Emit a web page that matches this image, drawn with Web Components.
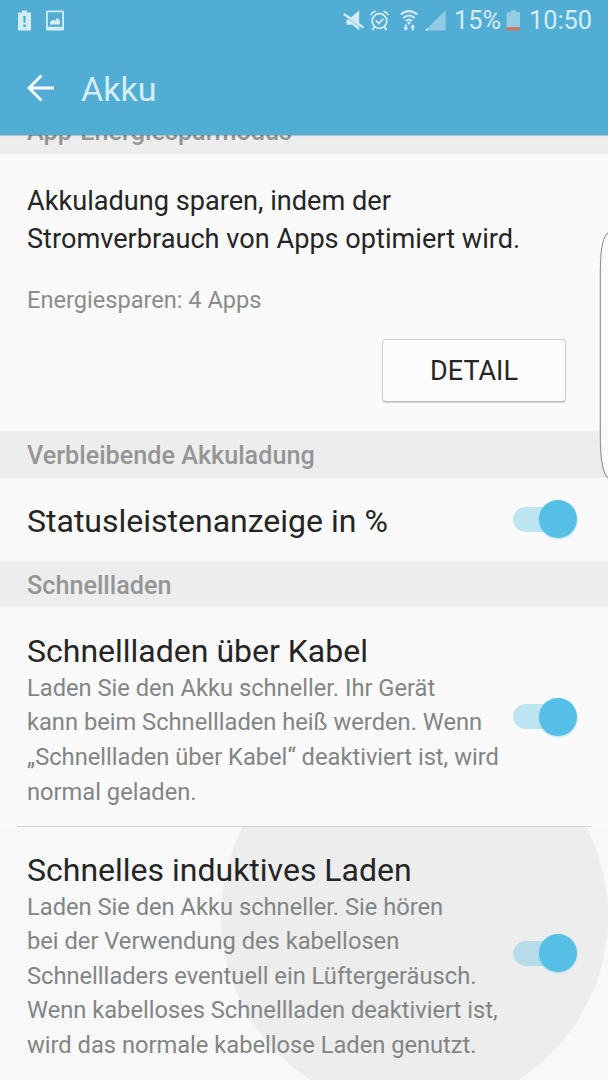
<!DOCTYPE html>
<html lang="de">
<head>
<meta charset="utf-8">
<title>Akku</title>
<style>
  body {
    margin: 0;
    font-family: Roboto, "Liberation Sans", sans-serif;
    color: #252525;
    background: #fafafa;
  }
</style>
</head>
<body>
<settings-screen></settings-screen>

<script>
const make = (html) => {
  const template = document.createElement('template');
  template.innerHTML = html;
  return template;
};

class BaseElement extends HTMLElement {
  constructor() {
    super();
    this._shadowRoot = this.attachShadow({ mode: 'open' });
    this._shadowRoot.appendChild(this.constructor.template.content.cloneNode(true));
  }
}

class StatusBar extends BaseElement {}
StatusBar.template = make(`
  <style>
    :host {
      display: flex;
      justify-content: space-between;
      height: 41px;
      padding: 0 16px 0 17px;
      color: #d6ecf5;
      font-size: 25.300px;
      line-height: 43px;
    }

    div {
      display: flex;
      align-items: center;
    }

    svg {
      display: block;
      fill: currentColor;
    }

    .picture { margin-left: 13px; }
    .alarm { margin-left: 6px; }
    .wifi { margin-left: 11px; }
    .signal { margin-left: 7px; }
    .percent { margin-left: 7px; }
    .battery { margin-left: 5px; }
    .time { margin-left: 8px; }
  </style>
  <div>
    <svg width="15" height="22" viewBox="0 0 15 22">
      <path fill-rule="evenodd" d="M5 0.5h5v2h4v18H1v-18h4zM6.2 6l.5 7h1.6l.5-7zM6.2 14.6v2.4h2.6v-2.4z"/>
    </svg>
    <svg class="picture" width="20" height="22" viewBox="0 0 20 22">
      <path fill-rule="evenodd" d="M2.200 .5h15.600q1.200 0 1.200 1.200v17.600q0 1.200-1.200 1.200H2.200q-1.200 0-1.200-1.200V1.700q0-1.200 1.200-1.200zM2.800 2.200v14.600h14.400V2.200z"/>
      <path d="M5 14.500v-2.500l3-2.600 1.600 1.600 3-3.300L15 11v3.500z"/>
    </svg>
  </div>
  <div>
    <svg width="21" height="22" viewBox="0 0 21 22">
      <path d="M3.500 9.500h2.300l10.400 7.300v3.600L9.500 14.800h-6z"/>
      <path d="M7.500 7.800L16.200.5v13.400z"/>
      <path d="M.8 4L20.300 17.500" fill="none" stroke="currentColor" stroke-width="2.200"/>
    </svg>
    <svg class="alarm" width="19" height="22" viewBox="0 0 19 22">
      <g fill="none" stroke="currentColor" stroke-width="1.800">
        <circle cx="9.500" cy="11" r="7.300"/>
        <path d="M.8 5Q2 2.300 5.500 1.200M18.200 5Q17 2.300 13.500 1.200M4.600 16.500l-2 3.600M14.400 16.500l2 3.600M6 10.700l2.900 2.800L13.300 8.500"/>
      </g>
    </svg>
    <svg class="wifi" width="18" height="22" viewBox="0 0 18 22">
      <g fill="none" stroke="currentColor" stroke-width="2">
        <path d="M.8 4.600Q9-2.400 17.200 4.600M3.300 8Q9 3 14.700 8M5.900 11.100Q9 8.300 12.100 11.100"/>
      </g>
      <circle cx="9" cy="13" r="1.500"/>
      <path d="M4.800 14.500h2v3h1.500l-2.500 3.500-2.500-3.500h1.500zM11.800 20.500h2v-3h1.500l-2.500-3.300-2.500 3.300h1.500z"/>
    </svg>
    <svg class="signal" width="22" height="22" viewBox="0 0 22 22">
      <path d="M0 20.500l3.500-3.500v3.500z"/>
      <path d="M4.500 20.500V16.200L20.700.3v20.200z" opacity=".47"/>
    </svg>
    <span class="percent">15%</span>
    <svg class="battery" width="15" height="22" viewBox="0 0 15 22">
      <path d="M5 .2h5v2h4v15.200H.7V2.200H5z" opacity=".5"/>
      <path d="M.7 17.400H14v3H.7z" fill="#dd6f53"/>
    </svg>
    <span class="time">10:50</span>
  </div>
`);

class AppBar extends BaseElement {}
AppBar.template = make(`
  <style>
    :host {
      display: block;
      position: relative;
      z-index: 1;
      height: 135px;
      background: #52add5;
      box-shadow: 0 1px 1px rgba(0, 0, 0, .18);
    }

    .title {
      display: flex;
      align-items: center;
      height: 94px;
      padding-left: 27px;
    }

    h1 {
      margin: 2px 0 0 26px;
      color: #d6edf6;
      font-size: 34px;
      font-weight: 400;
      line-height: 40px;
    }
  </style>
  <status-bar></status-bar>
  <div class="title">
    <svg width="28" height="28" viewBox="0 0 28 28" fill="none" stroke="#fff" stroke-width="2.800">
      <path d="M27 14H2M14.500 1.600L2 14l12.500 12.400"/>
    </svg>
    <h1><slot></slot></h1>
  </div>
`);

class SectionHeader extends BaseElement {}
SectionHeader.template = make(`
  <style>
    :host {
      display: block;
      box-sizing: border-box;
      height: 47px;
      padding-left: 27px;
      background: #ededed;
      color: #949696;
      font-size: 25.200px;
      font-weight: 500;
      line-height: 50px;
      white-space: nowrap;
    }
  </style>
  <slot></slot>
`);

class ToggleSwitch extends BaseElement {}
ToggleSwitch.template = make(`
  <style>
    :host {
      display: flex;
      flex: none;
      align-items: center;
      width: 64px;
      height: 38px;
    }

    .track {
      width: 44px;
      height: 25px;
      border-radius: 13px 0 0 13px;
      background: rgba(86, 191, 230, .36);
    }

    .thumb {
      width: 38px;
      height: 38px;
      margin-left: -18px;
      border-radius: 50%;
      background: #56bfe5;
      box-shadow: 0 1px 2px rgba(86, 191, 229, .5);
    }
  </style>
  <div class="track"></div>
  <div class="thumb"></div>
`);

class SettingRow extends BaseElement {}
SettingRow.template = make(`
  <style>
    :host {
      display: flex;
      position: relative;
      box-sizing: border-box;
      align-items: center;
      justify-content: space-between;
      height: var(--row-height, 83px);
      padding: 0 31px 0 27px;
      overflow: hidden;
    }

    .text {
      position: relative;
      padding-top: var(--text-shift, 3px);
      white-space: nowrap;
    }

    h2 {
      margin: 0;
      font-size: 32px;
      font-weight: 400;
      line-height: 39px;
    }

    p {
      margin: 0;
      color: #828585;
      font-size: 23.680px;
      line-height: 34.600px;
    }

    toggle-switch {
      position: relative;
      margin-bottom: 1px;
    }

    .ripple, .line { display: none; }

    :host([divider]) .line {
      display: block;
      position: absolute;
      left: 17px;
      right: 17px;
      bottom: 0;
      height: 1px;
      background: #d2d2d2;
    }

    :host([pressed]) { background: #f8f8f8; }

    /* touch feedback, clipped by the row */
    :host([pressed]) .ripple {
      display: block;
      position: absolute;
      left: 220.500px;
      top: -104px;
      width: 387px;
      height: 387px;
      border-radius: 50%;
      background: #ededed;
    }
  </style>
  <div class="ripple"></div>
  <div class="text">
    <h2><slot name="title"></slot></h2>
    <p><slot></slot></p>
  </div>
  <toggle-switch></toggle-switch>
  <div class="line"></div>
`);

class PowerSaving extends BaseElement {}
PowerSaving.template = make(`
  <style>
    :host {
      display: flex;
      flex-direction: column;
      box-sizing: border-box;
      height: 277px;
      padding: 28px 42px 0 27px;
    }

    .lead {
      font-size: 27.150px;
      line-height: 38.400px;
      white-space: nowrap;
    }

    .state {
      margin-top: 24px;
      color: #8a8c8c;
      font-size: 23.600px;
      line-height: 34px;
    }

    button {
      align-self: flex-end;
      width: 184px;
      height: 63px;
      margin-top: 22px;
      padding: 2px 0 0;
      border: 1px solid #cfcfcf;
      border-bottom-color: #bababa;
      border-radius: 4px;
      background: #fcfcfc;
      box-shadow: 0 1px 1px rgba(0, 0, 0, .16);
      color: inherit;
      font: 27px Roboto, "Liberation Sans", sans-serif;
    }
  </style>
  <div class="lead"><slot></slot></div>
  <div class="state"><slot name="state"></slot></div>
  <button><slot name="action"></slot></button>
`);

class EdgeHandle extends BaseElement {}
EdgeHandle.template = make(`
  <style>
    :host {
      display: block;
      position: absolute;
      z-index: 2;
      top: 228px;
      right: 0;
    }

    svg { display: block; }
  </style>
  <svg width="10" height="254" viewBox="0 0 10 254">
    <path d="M10.500 4.500C4.500 8 2.300 24 2.300 44V209C2.300 232 4.500 246 10.500 250" fill="#fafafa" stroke="#8e8e8e" stroke-width="1.100"/>
  </svg>
`);

class SettingsScreen extends BaseElement {}
SettingsScreen.template = make(`
  <style>
    :host {
      display: block;
      position: relative;
      width: 608px;
      height: 1080px;
      overflow: hidden;
      background: #fafafa;
    }

    /* the list is scrolled a little way under the app bar */
    main { margin-top: -28px; }
    .last-header { height: 46px; }

    .cable {
      --row-height: 220px;
      --text-shift: 7px;
    }

    .wireless {
      --row-height: 253px;
      --text-shift: 6px;
    }
  </style>
  <app-bar>Akku</app-bar>
  <main>
    <section-header>App-Energiesparmodus</section-header>
    <power-saving>
      Akkuladung sparen, indem der<br>Stromverbrauch von Apps optimiert wird.
      <span slot="state">Energiesparen: 4 Apps</span>
      <span slot="action">DETAIL</span>
    </power-saving>
    <section-header>Verbleibende Akkuladung</section-header>
    <setting-row>
      <span slot="title">Statusleistenanzeige in %</span>
    </setting-row>
    <section-header class="last-header">Schnellladen</section-header>
    <setting-row class="cable" divider>
      <span slot="title">Schnellladen über Kabel</span>
      Laden Sie den Akku schneller. Ihr Gerät<br>kann beim Schnellladen heiß werden. Wenn<br>„Schnellladen über Kabel“ deaktiviert ist, wird<br>normal geladen.
    </setting-row>
    <setting-row class="wireless" pressed>
      <span slot="title">Schnelles induktives Laden</span>
      Laden Sie den Akku schneller. Sie hören<br>bei der Verwendung des kabellosen<br>Schnellladers eventuell ein Lüftergeräusch.<br>Wenn kabelloses Schnellladen deaktiviert ist,<br>wird das normale kabellose Laden genutzt.
    </setting-row>
  </main>
  <edge-handle></edge-handle>
`);

customElements.define('status-bar', StatusBar);
customElements.define('app-bar', AppBar);
customElements.define('section-header', SectionHeader);
customElements.define('toggle-switch', ToggleSwitch);
customElements.define('setting-row', SettingRow);
customElements.define('power-saving', PowerSaving);
customElements.define('edge-handle', EdgeHandle);
customElements.define('settings-screen', SettingsScreen);
</script>
</body>
</html>
